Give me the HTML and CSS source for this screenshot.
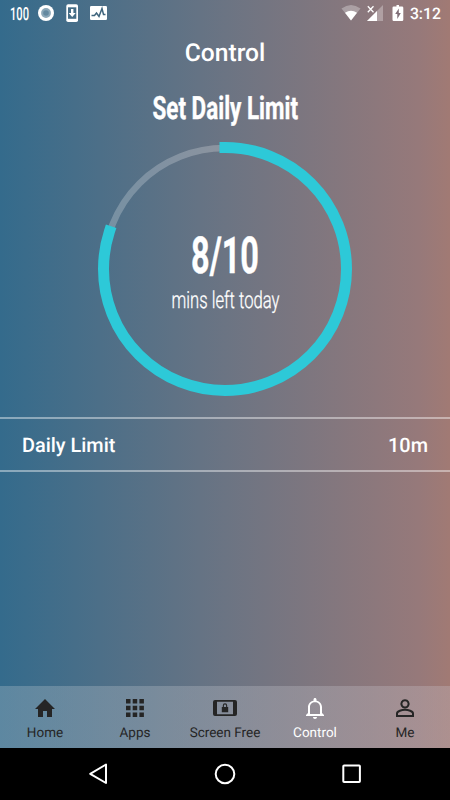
FILE: index.html
```html
<!DOCTYPE html>
<html lang="en">
<head>
    <meta charset="UTF-8">
    <meta name="viewport" content="width=device-width, initial-scale=1.0">
    <title>Control</title>
    <link rel="stylesheet" href="styles.css">
</head>
<body>
    <div class="status-bar">
        <svg class="status-left" width="110" height="26" viewBox="0 0 110 26">
            <text class="din-small" x="10" y="19.5" font-size="18" textLength="19" lengthAdjust="spacingAndGlyphs">100</text>
            <circle cx="46" cy="13" r="8" fill="#fff"/>
            <circle cx="46" cy="13" r="4.9" fill="#8ba7b8"/>
            <circle cx="46" cy="13" r="2.8" fill="#6489a0"/>
            <rect x="66.3" y="4.3" width="11.7" height="17.7" rx="1.8" fill="#fff"/>
            <path d="M68 7.3h8.300v11.500h-8.300z" fill="#456d86"/>
            <path d="M71 9h2.400v4h2.300L72.200 17l-3.500-4H71z" fill="#fff"/>
            <rect x="90" y="6" width="17" height="14" rx="1.200" fill="#fff"/>
            <path d="M91.500 15.500h3l2-2.500 2.500 3.500 3-8 1.500 6h2" fill="none" stroke="#3f657d" stroke-width="1.500"/>
        </svg>
        <div class="status-right">
            <svg width="64" height="26" viewBox="0 0 64 26">
                <path d="M.5 8.500Q10 1.500 19.500 8.500L10 20.500z" fill="#fff" opacity=".3"/>
                <path d="M4 12.800Q10 8.800 16 12.800L10 20.500z" fill="#fff"/>
                <path d="M42 5v16H26z" fill="#fff" opacity=".3"/>
                <path d="M36 11v10H26z" fill="#fff"/>
                <path d="M26.800 6.300l5.700 5.900M32.500 6.300l-5.700 5.900" stroke="#fff" stroke-width="1.300"/>
                <path d="M54 5h2.500v1.500h3q1.300 0 1.300 1.300v12q0 1.200-1.300 1.200h-8.300q-1.200 0-1.200-1.200v-12q0-1.300 1.200-1.300H54z" transform="translate(1.500 0)" fill="#fff"/>
                <path d="M57.800 8.600L54.200 14h2.100v4.900l3.500-5.900h-2z" fill="#806f77"/>
            </svg>
            <span class="clock">3:12</span>
        </div>
    </div>

    <header>Control</header>

    <main>
        <svg class="dial" width="450" height="331" viewBox="0 86 450 331">
            <text class="din-bold" x="152.500" y="119" font-size="32" textLength="145.500" lengthAdjust="spacingAndGlyphs">Set Daily Limit</text>
            <circle class="track" cx="225" cy="269" r="121"/>
            <circle class="progress" cx="225" cy="269" r="121.500" pathLength="100" transform="rotate(-90 225 269)"/>
            <text class="din-bold" x="191" y="273" font-size="51" textLength="68" lengthAdjust="spacingAndGlyphs">8/10</text>
            <text class="din-light" x="171.500" y="308" font-size="23.500" textLength="108" lengthAdjust="spacingAndGlyphs">mins left today</text>
        </svg>
        <div class="row">
            <span>Daily Limit</span>
            <span>10m</span>
        </div>
    </main>

    <nav class="tabs">
        <div class="tab">
            <svg width="24" height="24" viewBox="0 0 24 24"><path d="M10 21v-6h4v6h5v-8h3L12 3 2 13h3v8z"/></svg>
            <span>Home</span>
        </div>
        <div class="tab">
            <svg width="24" height="24" viewBox="0 0 24 24"><path d="M3 3h4.500v4.500H3zM9.700 3h4.500v4.500H9.700zM16.400 3h4.500v4.500h-4.500zM3 9.700h4.500v4.500H3zM9.700 9.700h4.500v4.500H9.700zM16.400 9.700h4.500v4.500h-4.500zM3 16.400h4.500v4.500H3zM9.700 16.400h4.500v4.500H9.700zM16.400 16.400h4.500v4.500h-4.500z"/></svg>
            <span>Apps</span>
        </div>
        <div class="tab">
            <svg width="26" height="24" viewBox="0 0 26 24">
                <path fill-rule="evenodd" d="M3 4h20q2 0 2 2v12q0 2-2 2H3q-2 0-2-2V6q0-2 2-2zM5 5.800v12.400h16V5.800z"/>
                <path fill-rule="evenodd" d="M10.800 11v-1.500a2.200 2.200 0 0 1 4.400 0V11h1v5.300H9.800V11zm1.100 0h2.200v-1.500a1.100 1.100 0 0 0-2.200 0z"/>
            </svg>
            <span>Screen Free</span>
        </div>
        <div class="tab active">
            <svg width="24" height="24" viewBox="0 0 24 24"><path d="M12 23c1.100 0 2-.9 2-2h-4c0 1.100.9 2 2 2zm7-6v-6c0-3.070-2.130-5.640-5.500-6.320V3.500c0-.83-.67-1.500-1.500-1.500s-1.500.67-1.500 1.500v1.180C7.140 5.360 5 7.920 5 11v6l-2 2v1h18v-1l-2-2zm-2 1H7v-7c0-2.680 2.010-4.700 5-4.700s5 2.020 5 4.700v7z"/></svg>
            <span>Control</span>
        </div>
        <div class="tab">
            <svg width="24" height="24" viewBox="0 0 24 24"><path class="person" d="M12 4.300a3.600 3.600 0 1 0 .01 0zM4 20v-2.500c0-2.500 5-3.700 8-3.700s8 1.200 8 3.700V20z"/></svg>
            <span>Me</span>
        </div>
    </nav>

    <div class="system-nav">
        <svg width="20" height="24" viewBox="0 0 20 24"><path d="M18 2.500v18.500L2.200 11.800z"/></svg>
        <svg width="22" height="24" viewBox="0 0 22 24"><circle cx="11" cy="12" r="9.300"/></svg>
        <svg width="20" height="24" viewBox="0 0 20 24"><rect x="1.300" y="3.500" width="16.600" height="16.600" rx=".8"/></svg>
    </div>
</body>
</html>
```
FILE: styles.css
```css
body {
    margin: 0;
    height: 800px;
    display: flex;
    flex-direction: column;
    overflow: hidden;
    font-family: Roboto, "Liberation Sans", sans-serif;
    text-rendering: geometricPrecision;
    color: #fff;
    background: linear-gradient(to right, #346b8c 0%, #6b7483 50%, #96797a 93%, #a17a74 100%);
}
svg {
    display: block;
}
.status-bar {
    display: flex;
    justify-content: space-between;
    height: 26px;
}
.status-right {
    display: flex;
    padding-right: 9px;
    gap: 5px;
}
.clock {
    font-size: 15.8px;
    font-weight: 500;
    line-height: 28px;
}
header {
    height: 60px;
    line-height: 55px;
    text-align: center;
    font-size: 24.6px;
    font-weight: 500;
}
main {
    flex: 1;
}
.din-bold {
    font-weight: 700;
    fill: #fff;
    stroke: #fff;
    stroke-width: 0.4;
}
.din-small {
    font-weight: 500;
    fill: #fff;
}
.din-light {
    font-weight: 300;
    fill: #fff;
    stroke: #fff;
    stroke-width: 0.3;
}
.track {
    fill: none;
    stroke: rgba(255, 255, 255, 0.23);
    stroke-width: 6.5;
}
.progress {
    fill: none;
    stroke: #2dc9d8;
    stroke-width: 11;
    stroke-linecap: square;
    stroke-dasharray: 80 100;
}
.row {
    display: flex;
    justify-content: space-between;
    box-sizing: border-box;
    height: 55px;
    padding: 0 22px;
    border-top: 2px solid rgba(255, 255, 255, 0.42);
    border-bottom: 2px solid rgba(255, 255, 255, 0.42);
    font-size: 19.9px;
    font-weight: 500;
    line-height: 54px;
}
.tabs {
    display: grid;
    grid-template-columns: repeat(5, 1fr);
    height: 62px;
    background: linear-gradient(to right, rgba(150, 175, 190, 0.42), rgba(190, 175, 180, 0.42));
}
.tab {
    display: flex;
    flex-direction: column;
    align-items: center;
    padding-top: 10px;
    font-size: 13.5px;
    line-height: 26px;
    color: #252525;
    fill: #252525;
}
.active {
    color: #fff;
    fill: #fff;
}
.person {
    fill: none;
    stroke: #252525;
    stroke-width: 2;
}
.system-nav {
    display: flex;
    justify-content: space-between;
    box-sizing: border-box;
    height: 52px;
    padding: 14px 88px;
    background: #000;
    fill: none;
    stroke: #fff;
    stroke-width: 2;
    stroke-linejoin: round;
}
```
